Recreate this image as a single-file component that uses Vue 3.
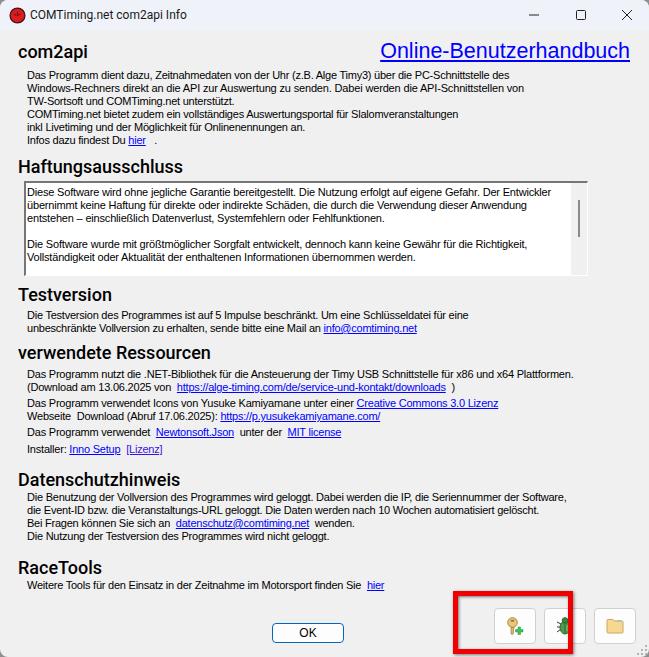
<script setup>
</script>

<template>
  <div class="window">
    <header class="titlebar">
      <svg class="app-icon" width="17" height="17" viewBox="0 0 16 16">
        <circle cx="8" cy="8" r="7" fill="#d81e22" stroke="#4a1214" stroke-width="1.2" />
        <path d="M4.5 6.5 L7 8 M8 4 L8 8 L11 6.5" stroke="#7c1014" stroke-width="1" fill="none" />
      </svg>
      <span class="title">COMTiming.net com2api Info</span>
      <div class="controls">
        <svg width="12" height="12" viewBox="0 0 12 12"><path d="M0 6 H10" stroke="#222" /></svg>
        <svg width="12" height="12" viewBox="0 0 12 12"><rect x="1.5" y="1.5" width="9" height="9" rx="1" fill="none" stroke="#222" /></svg>
        <svg width="12" height="12" viewBox="0 0 12 12"><path d="M1 1 L11 11 M11 1 L1 11" stroke="#222" /></svg>
      </div>
    </header>

    <main class="content">
      <section class="first">
        <div class="top-row">
          <h2>com2api</h2>
          <a class="manual">Online-Benutzerhandbuch</a>
        </div>
        <div class="body">
          <div>Das Programm dient dazu, Zeitnahmedaten von der Uhr (z.B. Alge Timy3) über die PC-Schnittstelle des</div>
          <div class="wide">Windows-Rechners direkt an die API zur Auswertung zu senden. Dabei werden die API-Schnittstellen von</div>
          <div>TW-Sortsoft und COMTiming.net unterstützt.</div>
          <div>COMTiming.net bietet zudem ein vollständiges Auswertungsportal für Slalomveranstaltungen</div>
          <div>inkl Livetiming und der Möglichkeit für Onlinenennungen an.</div>
          <div>Infos dazu findest Du <a>hier</a> &nbsp; .</div>
        </div>
      </section>

      <section class="disclaimer">
        <h2>Haftungsausschluss</h2>
        <div class="textbox">
          <div class="textbox-text">
            <div>Diese Software wird ohne jegliche Garantie bereitgestellt. Die Nutzung erfolgt auf eigene Gefahr. Der Entwickler</div>
            <div>übernimmt keine Haftung für direkte oder indirekte Schäden, die durch die Verwendung dieser Anwendung</div>
            <div>entstehen – einschließlich Datenverlust, Systemfehlern oder Fehlfunktionen.</div>
            <div>&nbsp;</div>
            <div>Die Software wurde mit größtmöglicher Sorgfalt entwickelt, dennoch kann keine Gewähr für die Richtigkeit,</div>
            <div>Vollständigkeit oder Aktualität der enthaltenen Informationen übernommen werden.</div>
          </div>
          <div class="scrollbar"><div class="thumb"></div></div>
        </div>
      </section>

      <section class="test">
        <h2>Testversion</h2>
        <div class="body">
          <div>Die Testversion des Programmes ist auf 5 Impulse beschränkt. Um eine Schlüsseldatei für eine</div>
          <div>unbeschränkte Vollversion zu erhalten, sende bitte eine Mail an <a>info@comtiming.net</a></div>
        </div>
      </section>

      <section class="resources">
        <h2>verwendete Ressourcen</h2>
        <div class="body">
          <div>Das Programm nutzt die .NET-Bibliothek für die Ansteuerung der Timy USB Schnittstelle für x86 und x64 Plattformen.</div>
          <div>(Download am 13.06.2025 von &nbsp;<a>https://alge-timing.com/de/service-und-kontakt/downloads</a> &nbsp;)</div>
          <div class="gap">Das Programm verwendet Icons von Yusuke Kamiyamane unter einer <a>Creative Commons 3.0 Lizenz</a></div>
          <div>Webseite &nbsp;Download (Abruf 17.06.2025): <a>https://p.yusukekamiyamane.com/</a></div>
          <div class="gap">Das Programm verwendet &nbsp;<a>Newtonsoft.Json</a> &nbsp;unter der &nbsp;<a>MIT license</a></div>
          <div class="gap-lg">Installer: <a>Inno Setup</a> &nbsp;<a class="visited">[Lizenz]</a></div>
        </div>
      </section>

      <section class="privacy">
        <h2>Datenschutzhinweis</h2>
        <div class="body">
          <div>Die Benutzung der Vollversion des Programmes wird geloggt. Dabei werden die IP, die Seriennummer der Software,</div>
          <div>die Event-ID bzw. die Veranstaltungs-URL geloggt. Die Daten werden nach 10 Wochen automatisiert gelöscht.</div>
          <div>Bei Fragen können Sie sich an &nbsp;<a>datenschutz@comtiming.net</a> &nbsp;wenden.</div>
          <div>Die Nutzung der Testversion des Programmes wird nicht geloggt.</div>
        </div>
      </section>

      <section class="tools">
        <h2>RaceTools</h2>
        <div class="body">
          <div>Weitere Tools für den Einsatz in der Zeitnahme im Motorsport finden Sie &nbsp;<a>hier</a></div>
        </div>
      </section>

      <footer class="footer">
        <button class="ok">OK</button>
        <div class="icon-buttons">
          <button class="icon-btn">
            <svg width="18" height="18" viewBox="0 0 18 18">
              <path d="M5 10 H8 V12 L7 13 L8 14 L7 15 L8 16 L6.5 17.5 L5 17 Z" fill="#d8b468" stroke="#9c7a3a" stroke-width=".6" />
              <circle cx="6.5" cy="5.5" r="4.8" fill="#e8c67c" stroke="#ab8742" />
              <ellipse cx="6.5" cy="3.8" rx="2" ry="1" fill="#9a7631" />
              <path d="M12 10 H14.5 V12.5 H17 V15 H14.5 V17.5 H12 V15 H9.5 V12.5 H12 Z" fill="#3cc451" stroke="#22953a" stroke-width=".5" />
            </svg>
          </button>
          <button class="icon-btn">
            <svg width="18" height="18" viewBox="0 0 18 18">
              <path d="M1 5 L5 7 M1 10 H4 M1 15 L5 12 M17 5 L13 7 M17 15 L13 12" stroke="#333" stroke-width="1" />
              <ellipse cx="9" cy="10.5" rx="5" ry="6.5" fill="#4f9a4b" stroke="#2b6a2f" />
              <circle cx="9" cy="3.5" r="2.8" fill="#3c8540" stroke="#2b6a2f" />
              <path d="M9 5 V16.5" stroke="#2b6a2f" />
              <path d="M11 8 V14" stroke="#8fce85" />
            </svg>
          </button>
          <button class="icon-btn">
            <svg width="18" height="16" viewBox="0 0 18 16">
              <path d="M1 2.5 Q1 1.5 2 1.5 H7 L8 3 H16 Q17 3 17 4 V14 Q17 15 16 15 H2 Q1 15 1 14 Z" fill="#f6d98e" stroke="#c9a860" />
              <path d="M11 2 H15.5 V3.5 H11 Z" fill="#8fc6dd" />
            </svg>
          </button>
        </div>
      </footer>
    </main>

    <svg class="grip" width="12" height="12" viewBox="0 0 12 12">
      <g fill="#b4b4b4">
        <rect x="8" y="0" width="2" height="2" />
        <rect x="4" y="4" width="2" height="2" />
        <rect x="8" y="4" width="2" height="2" />
        <rect x="0" y="8" width="2" height="2" />
        <rect x="4" y="8" width="2" height="2" />
        <rect x="8" y="8" width="2" height="2" />
      </g>
    </svg>

    <!-- Markierung liegt über dem Fenster -->
    <div class="highlight"></div>
  </div>
</template>

<style>
html, body {
  margin: 0;
  background: #8f8f8f;
}
</style>

<style scoped>
.window {
  position: relative;
  width: 649px;
  height: 657px;
  overflow: hidden;
  background: #f0f0f0;
  border-radius: 8px;
  font-family: "Liberation Sans", Arial, sans-serif;
  font-size: 11px;
  letter-spacing: -0.23px;
  color: #000;
}

.titlebar {
  display: flex;
  align-items: center;
  height: 30px;
  padding-left: 9px;
  background: #eff3f9;
  letter-spacing: 0;
}

.app-icon {
  margin-right: 4px;
}

.title {
  font-family: Roboto, "Noto Sans", sans-serif;
  font-size: 12px;
  color: #1a1a1a;
}

.controls {
  display: flex;
  align-items: center;
  gap: 34px;
  margin-left: auto;
  padding-right: 16px;
}

.content {
  padding: 0 19px 0 18px;
}

h2 {
  margin: 0;
  font-family: Roboto, "Liberation Sans", sans-serif;
  font-size: 18px;
  font-weight: 500;
  line-height: 20px;
  letter-spacing: 0;
}

.top-row {
  display: flex;
  justify-content: space-between;
  align-items: flex-start;
}

.first {
  padding-top: 12px;
}

.manual {
  margin-top: -3px;
  font-size: 21.5px;
  line-height: 24px;
  letter-spacing: 0;
}

a {
  color: #0000ff;
  text-decoration: underline;
}

a.visited {
  color: #3c10e0;
}

.body {
  padding-left: 9px;
  padding-top: 6px;
  line-height: 13px;
  white-space: nowrap;
}

.wide {
  letter-spacing: -0.16px;
}

.gap {
  margin-top: 3px;
}

.gap-lg {
  margin-top: 4px;
}

.disclaimer {
  margin-top: 10px;
}

.textbox {
  display: flex;
  width: 564px;
  height: 95px;
  margin: 4px 0 0 6px;
  box-sizing: border-box;
  border-top: 2px solid #767676;
  border-left: 2px solid #767676;
  border-right: 1px solid #fff;
  border-bottom: 1px solid #fff;
  background: #fff;
}

.textbox-text {
  flex: 1;
  padding: 3px 0 0 1px;
  line-height: 13px;
  letter-spacing: -0.18px;
  white-space: nowrap;
  overflow: hidden;
}

.scrollbar {
  width: 16px;
  background: #f0f0f0;
  padding: 17px 0 0 7px;
  box-sizing: border-box;
}

.thumb {
  width: 2px;
  height: 37px;
  background: #8a8a8a;
}

.test {
  margin-top: 9px;
}

.test .body {
  padding-top: 4px;
}

.resources {
  margin-top: 8px;
}

.resources .body {
  padding-top: 5px;
  letter-spacing: -0.21px;
}

.privacy {
  margin-top: 14px;
}

.privacy .body {
  padding-top: 1px;
}

.tools {
  margin-top: 15px;
}

.tools .body {
  padding-top: 1px;
}

.footer {
  display: flex;
  justify-content: space-between;
  align-items: flex-end;
  margin-top: 16px;
  margin-right: -6px;
  padding-left: 254px;
}

.ok {
  width: 72px;
  height: 20px;
  margin-bottom: 1px;
  padding: 0;
  background: #fdfdfd;
  border: 1px solid #0067c0;
  border-radius: 4px;
  font-family: "Liberation Sans", sans-serif;
  font-size: 12px;
  letter-spacing: 0;
  color: #000;
}

.icon-buttons {
  display: flex;
  gap: 8px;
}

.icon-btn {
  display: flex;
  align-items: center;
  justify-content: center;
  width: 42px;
  height: 36px;
  padding: 0;
  background: #fdfdfd;
  border: 1px solid #d0d0d0;
  border-radius: 4px;
}

.grip {
  position: absolute;
  right: 0;
  bottom: 0;
}

.highlight {
  position: absolute;
  left: 453px;
  top: 591px;
  width: 120px;
  height: 63px;
  box-sizing: border-box;
  border: 5px solid #f00000;
  box-shadow: 1px 1px 3px rgba(0, 0, 0, 0.5), inset 1px 1px 3px rgba(0, 0, 0, 0.5);
  pointer-events: none;
}
</style>
